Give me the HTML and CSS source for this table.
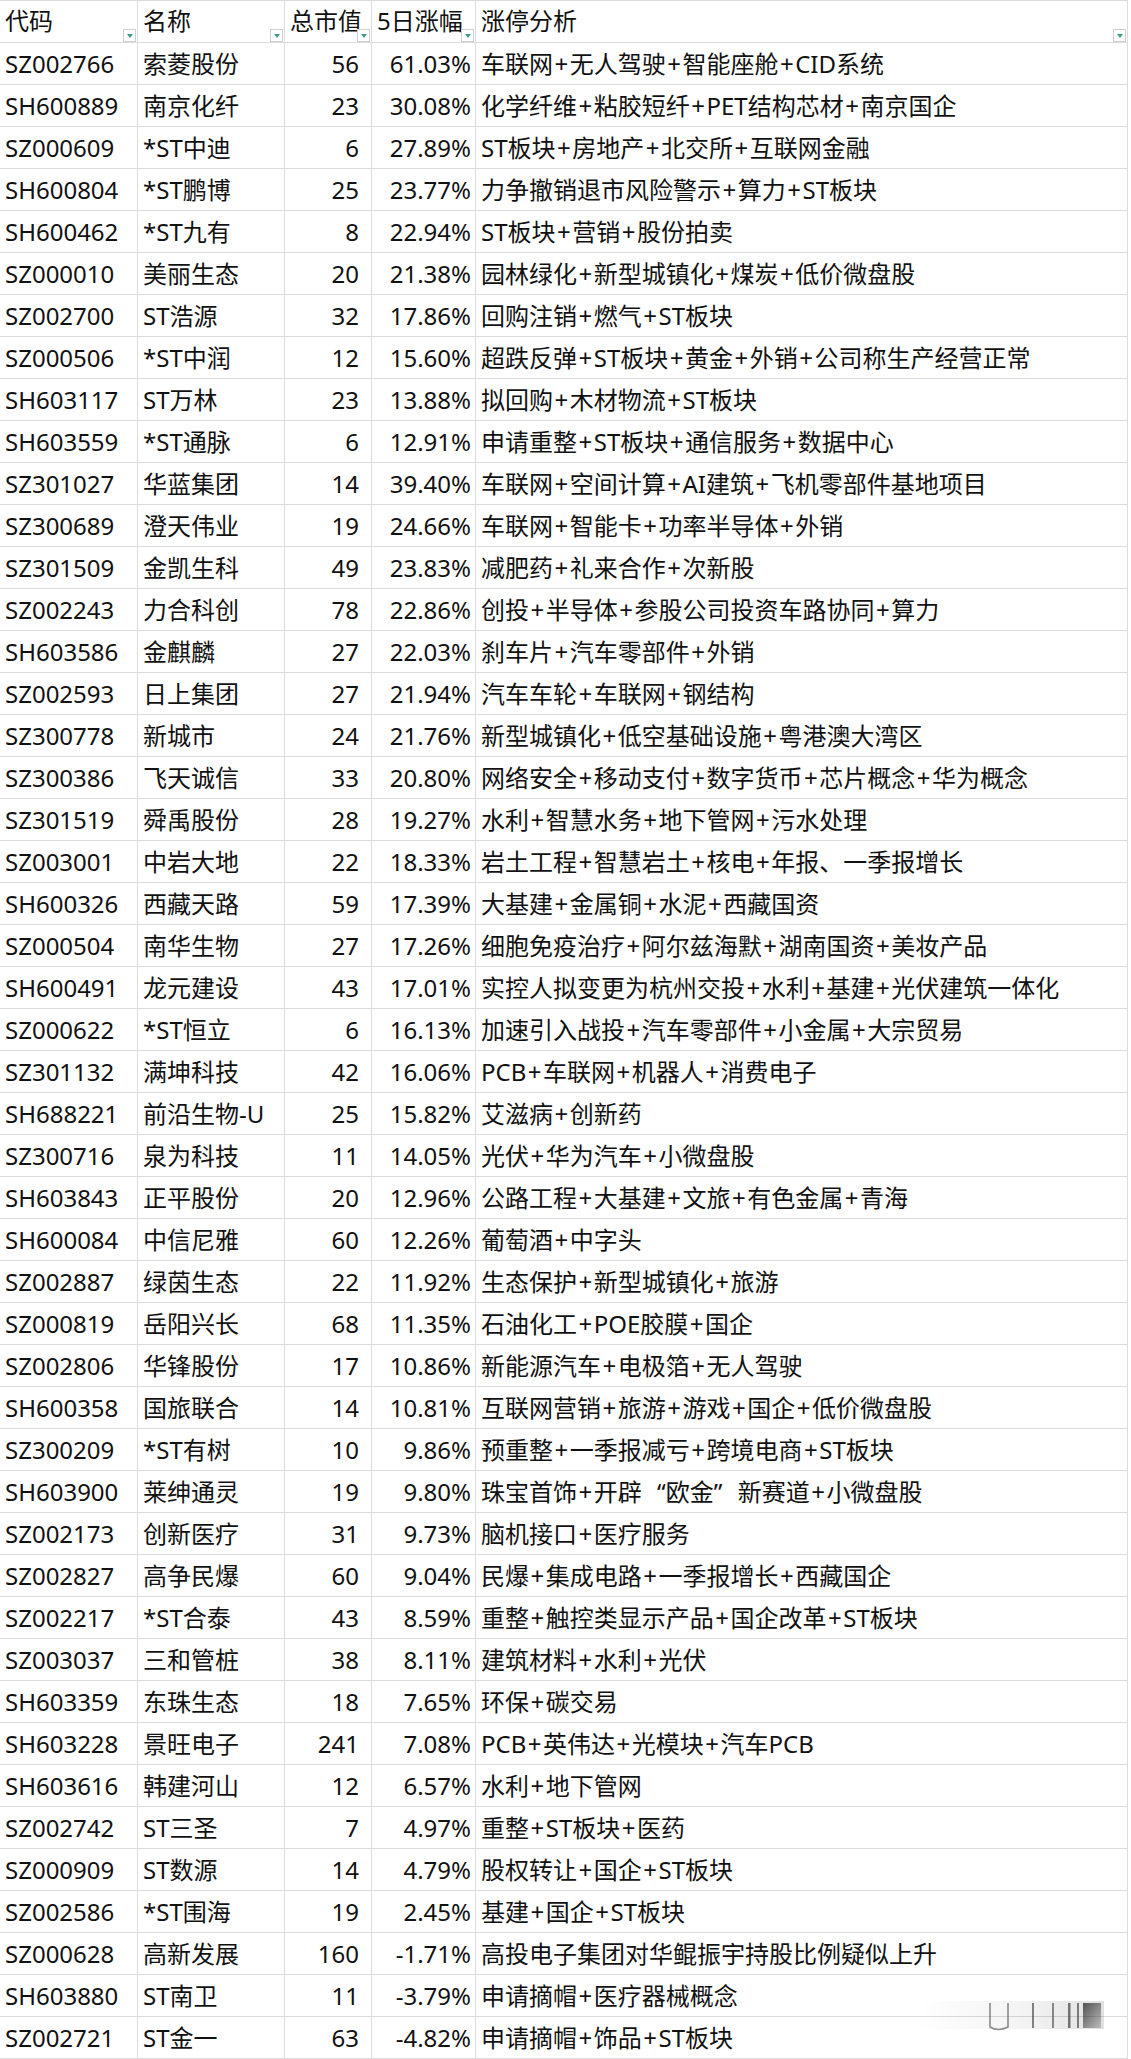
FILE: index.html
```html
<!DOCTYPE html>
<html lang="zh-CN">
<head>
<meta charset="utf-8">
<title>涨停分析</title>
<link rel="stylesheet" href="styles.css">
</head>
<body>
<div class="sheet">
  <div class="cell head">代码<span class="filter"></span></div>
  <div class="cell head">名称<span class="filter"></span></div>
  <div class="cell head">总市值<span class="filter"></span></div>
  <div class="cell head">5日涨幅<span class="filter"></span></div>
  <div class="cell head">涨停分析<span class="filter"></span></div>

  <div class="cell">SZ002766</div><div class="cell">索菱股份</div><div class="cell cap">56</div><div class="cell pct">61.03%</div><div class="cell">车联网<span class="p">+</span>无人驾驶<span class="p">+</span>智能座舱<span class="p">+</span>CID系统</div>
  <div class="cell">SH600889</div><div class="cell">南京化纤</div><div class="cell cap">23</div><div class="cell pct">30.08%</div><div class="cell">化学纤维<span class="p">+</span>粘胶短纤<span class="p">+</span>PET结构芯材<span class="p">+</span>南京国企</div>
  <div class="cell">SZ000609</div><div class="cell">*ST中迪</div><div class="cell cap">6</div><div class="cell pct">27.89%</div><div class="cell">ST板块<span class="p">+</span>房地产<span class="p">+</span>北交所<span class="p">+</span>互联网金融</div>
  <div class="cell">SH600804</div><div class="cell">*ST鹏博</div><div class="cell cap">25</div><div class="cell pct">23.77%</div><div class="cell">力争撤销退市风险警示<span class="p">+</span>算力<span class="p">+</span>ST板块</div>
  <div class="cell">SH600462</div><div class="cell">*ST九有</div><div class="cell cap">8</div><div class="cell pct">22.94%</div><div class="cell">ST板块<span class="p">+</span>营销<span class="p">+</span>股份拍卖</div>
  <div class="cell">SZ000010</div><div class="cell">美丽生态</div><div class="cell cap">20</div><div class="cell pct">21.38%</div><div class="cell">园林绿化<span class="p">+</span>新型城镇化<span class="p">+</span>煤炭<span class="p">+</span>低价微盘股</div>
  <div class="cell">SZ002700</div><div class="cell">ST浩源</div><div class="cell cap">32</div><div class="cell pct">17.86%</div><div class="cell">回购注销<span class="p">+</span>燃气<span class="p">+</span>ST板块</div>
  <div class="cell">SZ000506</div><div class="cell">*ST中润</div><div class="cell cap">12</div><div class="cell pct">15.60%</div><div class="cell">超跌反弹<span class="p">+</span>ST板块<span class="p">+</span>黄金<span class="p">+</span>外销<span class="p">+</span>公司称生产经营正常</div>
  <div class="cell">SH603117</div><div class="cell">ST万林</div><div class="cell cap">23</div><div class="cell pct">13.88%</div><div class="cell">拟回购<span class="p">+</span>木材物流<span class="p">+</span>ST板块</div>
  <div class="cell">SH603559</div><div class="cell">*ST通脉</div><div class="cell cap">6</div><div class="cell pct">12.91%</div><div class="cell">申请重整<span class="p">+</span>ST板块<span class="p">+</span>通信服务<span class="p">+</span>数据中心</div>
  <div class="cell">SZ301027</div><div class="cell">华蓝集团</div><div class="cell cap">14</div><div class="cell pct">39.40%</div><div class="cell">车联网<span class="p">+</span>空间计算<span class="p">+</span>AI建筑<span class="p">+</span>飞机零部件基地项目</div>
  <div class="cell">SZ300689</div><div class="cell">澄天伟业</div><div class="cell cap">19</div><div class="cell pct">24.66%</div><div class="cell">车联网<span class="p">+</span>智能卡<span class="p">+</span>功率半导体<span class="p">+</span>外销</div>
  <div class="cell">SZ301509</div><div class="cell">金凯生科</div><div class="cell cap">49</div><div class="cell pct">23.83%</div><div class="cell">减肥药<span class="p">+</span>礼来合作<span class="p">+</span>次新股</div>
  <div class="cell">SZ002243</div><div class="cell">力合科创</div><div class="cell cap">78</div><div class="cell pct">22.86%</div><div class="cell">创投<span class="p">+</span>半导体<span class="p">+</span>参股公司投资车路协同<span class="p">+</span>算力</div>
  <div class="cell">SH603586</div><div class="cell">金麒麟</div><div class="cell cap">27</div><div class="cell pct">22.03%</div><div class="cell">刹车片<span class="p">+</span>汽车零部件<span class="p">+</span>外销</div>
  <div class="cell">SZ002593</div><div class="cell">日上集团</div><div class="cell cap">27</div><div class="cell pct">21.94%</div><div class="cell">汽车车轮<span class="p">+</span>车联网<span class="p">+</span>钢结构</div>
  <div class="cell">SZ300778</div><div class="cell">新城市</div><div class="cell cap">24</div><div class="cell pct">21.76%</div><div class="cell">新型城镇化<span class="p">+</span>低空基础设施<span class="p">+</span>粤港澳大湾区</div>
  <div class="cell">SZ300386</div><div class="cell">飞天诚信</div><div class="cell cap">33</div><div class="cell pct">20.80%</div><div class="cell">网络安全<span class="p">+</span>移动支付<span class="p">+</span>数字货币<span class="p">+</span>芯片概念<span class="p">+</span>华为概念</div>
  <div class="cell">SZ301519</div><div class="cell">舜禹股份</div><div class="cell cap">28</div><div class="cell pct">19.27%</div><div class="cell">水利<span class="p">+</span>智慧水务<span class="p">+</span>地下管网<span class="p">+</span>污水处理</div>
  <div class="cell">SZ003001</div><div class="cell">中岩大地</div><div class="cell cap">22</div><div class="cell pct">18.33%</div><div class="cell">岩土工程<span class="p">+</span>智慧岩土<span class="p">+</span>核电<span class="p">+</span>年报、一季报增长</div>
  <div class="cell">SH600326</div><div class="cell">西藏天路</div><div class="cell cap">59</div><div class="cell pct">17.39%</div><div class="cell">大基建<span class="p">+</span>金属铜<span class="p">+</span>水泥<span class="p">+</span>西藏国资</div>
  <div class="cell">SZ000504</div><div class="cell">南华生物</div><div class="cell cap">27</div><div class="cell pct">17.26%</div><div class="cell">细胞免疫治疗<span class="p">+</span>阿尔兹海默<span class="p">+</span>湖南国资<span class="p">+</span>美妆产品</div>
  <div class="cell">SH600491</div><div class="cell">龙元建设</div><div class="cell cap">43</div><div class="cell pct">17.01%</div><div class="cell">实控人拟变更为杭州交投<span class="p">+</span>水利<span class="p">+</span>基建<span class="p">+</span>光伏建筑一体化</div>
  <div class="cell">SZ000622</div><div class="cell">*ST恒立</div><div class="cell cap">6</div><div class="cell pct">16.13%</div><div class="cell">加速引入战投<span class="p">+</span>汽车零部件<span class="p">+</span>小金属<span class="p">+</span>大宗贸易</div>
  <div class="cell">SZ301132</div><div class="cell">满坤科技</div><div class="cell cap">42</div><div class="cell pct">16.06%</div><div class="cell">PCB<span class="p">+</span>车联网<span class="p">+</span>机器人<span class="p">+</span>消费电子</div>
  <div class="cell">SH688221</div><div class="cell">前沿生物-U</div><div class="cell cap">25</div><div class="cell pct">15.82%</div><div class="cell">艾滋病<span class="p">+</span>创新药</div>
  <div class="cell">SZ300716</div><div class="cell">泉为科技</div><div class="cell cap">11</div><div class="cell pct">14.05%</div><div class="cell">光伏<span class="p">+</span>华为汽车<span class="p">+</span>小微盘股</div>
  <div class="cell">SH603843</div><div class="cell">正平股份</div><div class="cell cap">20</div><div class="cell pct">12.96%</div><div class="cell">公路工程<span class="p">+</span>大基建<span class="p">+</span>文旅<span class="p">+</span>有色金属<span class="p">+</span>青海</div>
  <div class="cell">SH600084</div><div class="cell">中信尼雅</div><div class="cell cap">60</div><div class="cell pct">12.26%</div><div class="cell">葡萄酒<span class="p">+</span>中字头</div>
  <div class="cell">SZ002887</div><div class="cell">绿茵生态</div><div class="cell cap">22</div><div class="cell pct">11.92%</div><div class="cell">生态保护<span class="p">+</span>新型城镇化<span class="p">+</span>旅游</div>
  <div class="cell">SZ000819</div><div class="cell">岳阳兴长</div><div class="cell cap">68</div><div class="cell pct">11.35%</div><div class="cell">石油化工<span class="p">+</span>POE胶膜<span class="p">+</span>国企</div>
  <div class="cell">SZ002806</div><div class="cell">华锋股份</div><div class="cell cap">17</div><div class="cell pct">10.86%</div><div class="cell">新能源汽车<span class="p">+</span>电极箔<span class="p">+</span>无人驾驶</div>
  <div class="cell">SH600358</div><div class="cell">国旅联合</div><div class="cell cap">14</div><div class="cell pct">10.81%</div><div class="cell">互联网营销<span class="p">+</span>旅游<span class="p">+</span>游戏<span class="p">+</span>国企<span class="p">+</span>低价微盘股</div>
  <div class="cell">SZ300209</div><div class="cell">*ST有树</div><div class="cell cap">10</div><div class="cell pct">9.86%</div><div class="cell">预重整<span class="p">+</span>一季报减亏<span class="p">+</span>跨境电商<span class="p">+</span>ST板块</div>
  <div class="cell">SH603900</div><div class="cell">莱绅通灵</div><div class="cell cap">19</div><div class="cell pct">9.80%</div><div class="cell">珠宝首饰<span class="p">+</span>开辟<span class="q qo">“</span>欧金<span class="q qc">”</span>新赛道<span class="p">+</span>小微盘股</div>
  <div class="cell">SZ002173</div><div class="cell">创新医疗</div><div class="cell cap">31</div><div class="cell pct">9.73%</div><div class="cell">脑机接口<span class="p">+</span>医疗服务</div>
  <div class="cell">SZ002827</div><div class="cell">高争民爆</div><div class="cell cap">60</div><div class="cell pct">9.04%</div><div class="cell">民爆<span class="p">+</span>集成电路<span class="p">+</span>一季报增长<span class="p">+</span>西藏国企</div>
  <div class="cell">SZ002217</div><div class="cell">*ST合泰</div><div class="cell cap">43</div><div class="cell pct">8.59%</div><div class="cell">重整<span class="p">+</span>触控类显示产品<span class="p">+</span>国企改革<span class="p">+</span>ST板块</div>
  <div class="cell">SZ003037</div><div class="cell">三和管桩</div><div class="cell cap">38</div><div class="cell pct">8.11%</div><div class="cell">建筑材料<span class="p">+</span>水利<span class="p">+</span>光伏</div>
  <div class="cell">SH603359</div><div class="cell">东珠生态</div><div class="cell cap">18</div><div class="cell pct">7.65%</div><div class="cell">环保<span class="p">+</span>碳交易</div>
  <div class="cell">SH603228</div><div class="cell">景旺电子</div><div class="cell cap">241</div><div class="cell pct">7.08%</div><div class="cell">PCB<span class="p">+</span>英伟达<span class="p">+</span>光模块<span class="p">+</span>汽车PCB</div>
  <div class="cell">SH603616</div><div class="cell">韩建河山</div><div class="cell cap">12</div><div class="cell pct">6.57%</div><div class="cell">水利<span class="p">+</span>地下管网</div>
  <div class="cell">SZ002742</div><div class="cell">ST三圣</div><div class="cell cap">7</div><div class="cell pct">4.97%</div><div class="cell">重整<span class="p">+</span>ST板块<span class="p">+</span>医药</div>
  <div class="cell">SZ000909</div><div class="cell">ST数源</div><div class="cell cap">14</div><div class="cell pct">4.79%</div><div class="cell">股权转让<span class="p">+</span>国企<span class="p">+</span>ST板块</div>
  <div class="cell">SZ002586</div><div class="cell">*ST围海</div><div class="cell cap">19</div><div class="cell pct">2.45%</div><div class="cell">基建<span class="p">+</span>国企<span class="p">+</span>ST板块</div>
  <div class="cell">SZ000628</div><div class="cell">高新发展</div><div class="cell cap">160</div><div class="cell pct">-1.71%</div><div class="cell">高投电子集团对华鲲振宇持股比例疑似上升</div>
  <div class="cell">SH603880</div><div class="cell">ST南卫</div><div class="cell cap">11</div><div class="cell pct">-3.79%</div><div class="cell">申请摘帽<span class="p">+</span>医疗器械概念</div>
  <div class="cell">SZ002721</div><div class="cell">ST金一</div><div class="cell cap">63</div><div class="cell pct">-4.82%</div><div class="cell">申请摘帽<span class="p">+</span>饰品<span class="p">+</span>ST板块</div>

  <svg class="watermark" width="190" height="40" viewBox="0 0 190 40" aria-hidden="true">
    <defs>
      <linearGradient id="wmband" x1="0" x2="1" y1="0" y2="0">
        <stop offset="0" stop-color="#000" stop-opacity="0"/>
        <stop offset="0.6" stop-color="#000" stop-opacity="0.05"/>
        <stop offset="1" stop-color="#000" stop-opacity="0.12"/>
      </linearGradient>
      <linearGradient id="wmblock" x1="0" x2="1" y1="0" y2="1">
        <stop offset="0" stop-color="#222" stop-opacity="0.75"/>
        <stop offset="1" stop-color="#222" stop-opacity="0.2"/>
      </linearGradient>
    </defs>
    <rect x="0" y="4" width="186" height="28" fill="url(#wmband)"/>
    <path d="M72 6 V30 Q80 35 90 30 V6" fill="none" stroke="#333" stroke-opacity="0.55" stroke-width="1.6"/>
    <rect x="114" y="6" width="2" height="25" fill="#333" fill-opacity="0.6"/>
    <rect x="134" y="6" width="2" height="25" fill="#333" fill-opacity="0.55"/>
    <rect x="150" y="6" width="2.5" height="25" fill="#333" fill-opacity="0.65"/>
    <rect x="159" y="6" width="2" height="25" fill="#333" fill-opacity="0.6"/>
    <rect x="165" y="6" width="18" height="25" fill="url(#wmblock)"/>
  </svg>
</div>
</body>
</html>
```

FILE: styles.css
```css
html, body {
  margin: 0;
  padding: 0;
  background: #ffffff;
}

.sheet {
  position: relative;
  display: grid;
  grid-template-columns: 138px 147px 87px 104px 652px;
  grid-auto-rows: 42px;
  width: 1128px;
  border-top: 1px solid #dcdcdc;
  font-family: "Noto Sans", "Noto Sans CJK SC", sans-serif;
  font-size: 24px;
  color: #111111;
}

.cell {
  position: relative;
  box-sizing: border-box;
  height: 42px;
  line-height: 41px;
  padding: 0 4px 0 5px;
  border-right: 1px solid #dcdcdc;
  border-bottom: 1px solid #dcdcdc;
  white-space: nowrap;
  overflow: hidden;
}

.head {
  line-height: 40px;
}

.cap {
  text-align: right;
  padding-right: 12px;
}

.pct {
  text-align: right;
  padding-right: 4px;
}

.p {
  margin: 0 1.5px;
}

.q {
  display: inline-block;
  width: 24px;
}

.qo {
  text-align: right;
}

.qc {
  text-align: left;
}

.filter {
  position: absolute;
  right: 1px;
  bottom: 0px;
  width: 13px;
  height: 13px;
  box-sizing: border-box;
  border: 1px solid #cfcfcf;
  background: #ffffff;
}

.filter::after {
  content: "";
  position: absolute;
  left: 3px;
  top: 4px;
  border-left: 3px solid transparent;
  border-right: 3px solid transparent;
  border-top: 4px solid #3f9a8a;
}

.watermark {
  position: absolute;
  left: 918px;
  top: 1996px;
}
```
